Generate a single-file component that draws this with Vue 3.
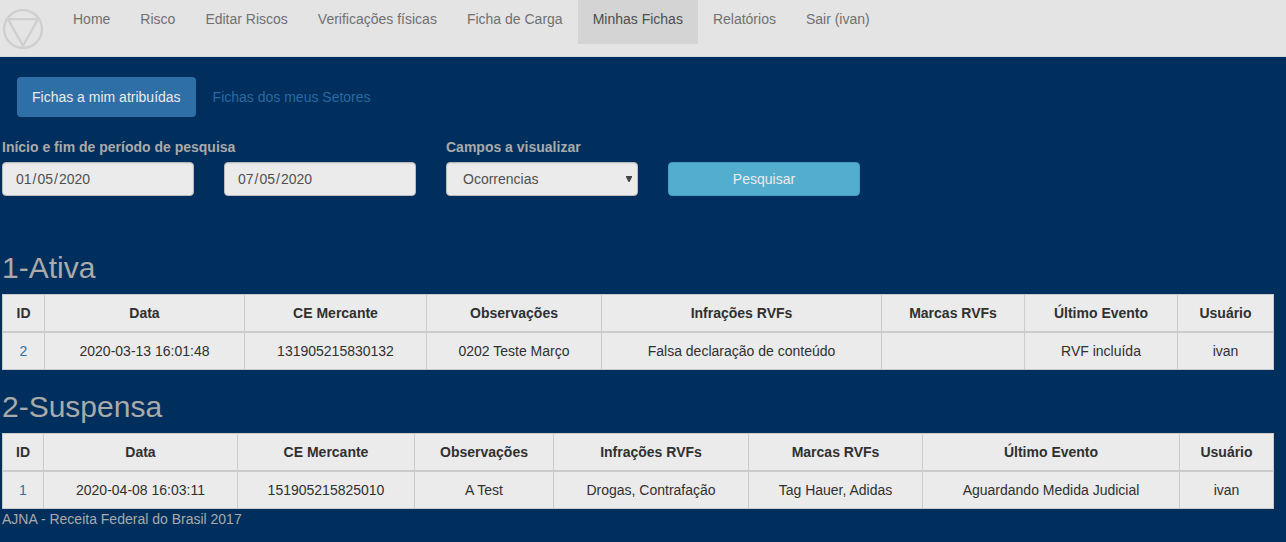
<script setup>
const nav = ['Home', 'Risco', 'Editar Riscos', 'Verificações físicas', 'Ficha de Carga', 'Minhas Fichas', 'Relatórios', 'Sair (ivan)']
const dates = [['01', '05', '2020'], ['07', '05', '2020']]
const headers = ['ID', 'Data', 'CE Mercante', 'Observações', 'Infrações RVFs', 'Marcas RVFs', 'Último Evento', 'Usuário']
const groups = [
  {
    title: '1-Ativa',
    widths: [42, 200, 182, 175, 280, 143, 153, 96],
    rows: [['2', '2020-03-13 16:01:48', '131905215830132', '0202 Teste Março', 'Falsa declaração de conteúdo', '', 'RVF incluída', 'ivan']]
  },
  {
    title: '2-Suspensa',
    widths: [41, 194, 177, 139, 195, 174, 257, 94],
    rows: [['1', '2020-04-08 16:03:11', '151905215825010', 'A Test', 'Drogas, Contrafação', 'Tag Hauer, Adidas', 'Aguardando Medida Judicial', 'ivan']]
  }
]
</script>

<template>
  <div class="page">
    <nav class="navbar">
      <svg class="logo" width="42" height="42" viewBox="0 0 42 42" fill="none" stroke="#cfcfcf" stroke-width="2.4">
        <circle cx="21" cy="21" r="18.9" />
        <path d="M6 11.1H36L21 37.8Z" />
      </svg>
      <ul class="menu">
        <li v-for="item in nav" :key="item">
          <a :class="{ active: item === 'Minhas Fichas' }">{{ item }}</a>
        </li>
      </ul>
    </nav>

    <main class="content">
      <div class="pills">
        <a class="pill active">Fichas a mim atribuídas</a>
        <a class="pill">Fichas dos meus Setores</a>
      </div>

      <form class="filters" @submit.prevent>
        <label class="period">Início e fim de período de pesquisa</label>
        <label class="fields">Campos a visualizar</label>
        <div v-for="date in dates" :key="date[0]" class="control">{{ date[0] }}<span class="slash">/</span>{{ date[1] }}<span class="slash">/</span>{{ date[2] }}</div>
        <div class="control select">
          <span>Ocorrencias</span>
          <svg width="6" height="6" viewBox="0 0 6 6"><path d="M0 0H6V1L3.5 6H2.5L0 1Z" fill="#444" /></svg>
        </div>
        <button class="search" type="submit">Pesquisar</button>
      </form>

      <section v-for="group in groups" :key="group.title" class="group">
        <h2>{{ group.title }}</h2>
        <table>
          <colgroup>
            <col v-for="(w, i) in group.widths" :key="i" :style="{ width: w + 'px' }" />
          </colgroup>
          <thead>
            <tr><th v-for="h in headers" :key="h">{{ h }}</th></tr>
          </thead>
          <tbody>
            <tr v-for="row in group.rows" :key="row[0]">
              <td v-for="(cell, i) in row" :key="i">
                <a v-if="i === 0">{{ cell }}</a>
                <template v-else>{{ cell }}</template>
              </td>
            </tr>
          </tbody>
        </table>
      </section>
      <footer>AJNA - Receita Federal do Brasil 2017</footer>
    </main>
  </div>
</template>

<style>
body {
  background: #002f5d;
}
</style>

<style scoped>
.page {
  min-height: 542px;
  overflow: hidden;
  background: #002f5d;
  color: #aaa;
  font: 14px/20px "Liberation Sans", Arial, sans-serif;
}
.page * {
  box-sizing: border-box;
}
.navbar {
  display: flex;
  align-items: flex-start;
  height: 57px;
  padding-left: 2px;
  background: #e4e4e4;
  border-bottom: 1px solid #d4d9d9;
}
.logo {
  display: block;
  flex: none;
  margin-top: 8px;
}
.menu {
  display: flex;
  margin: 0 0 0 14px;
  padding: 0;
  list-style: none;
}
.menu a {
  display: block;
  height: 44px;
  padding: 9px 15px 15px;
  color: #707070;
}
.menu a.active {
  background: #d4d4d4;
  color: #4d4d4d;
}
.content {
  padding: 20px 12px 0 2px;
}
.pills {
  display: flex;
  gap: 2px;
  padding-left: 15px;
}
.pill {
  padding: 10px 15px;
  border-radius: 4px;
  color: #2a69a3;
}
.pill.active {
  background: #2f6fa8;
  color: #ebebeb;
}
.filters {
  display: grid;
  grid-template-columns: repeat(4, 192px);
  column-gap: 30px;
  row-gap: 5px;
  margin-top: 20px;
}
.period {
  grid-column: 1 / 3;
}
.fields {
  grid-column: 3 / 5;
}
.filters label {
  font-weight: bold;
}
.control {
  height: 34px;
  padding: 6px 13px;
  background: #ebebeb;
  border: 1px solid #bbb;
  border-radius: 4px;
  box-shadow: inset 0 1px 1px rgba(0, 0, 0, 0.075);
  color: #505050;
}
.slash {
  padding: 0 1px;
}
.select {
  display: flex;
  align-items: center;
  justify-content: space-between;
  padding: 6px 5px 6px 16px;
}
.search {
  height: 34px;
  padding: 6px 12px;
  background: #53aecd;
  border: 1px solid #409fc0;
  border-radius: 4px;
  color: #ebebeb;
  font: inherit;
}
.group h2 {
  margin: 20px 0 10px;
  font-size: 30px;
  font-weight: normal;
  line-height: 33px;
}
.filters + .group h2 {
  margin-top: 55px;
}
table {
  width: 1272px;
  table-layout: fixed;
  border-collapse: collapse;
  background: #ebebeb;
  color: #303030;
}
th,
td {
  padding: 8px;
  border: 1px solid #cbcbcb;
  text-align: center;
}
td {
  height: 37px;
}
th {
  border-bottom-width: 2px;
}
td a {
  color: #2f6fa8;
}
</style>
